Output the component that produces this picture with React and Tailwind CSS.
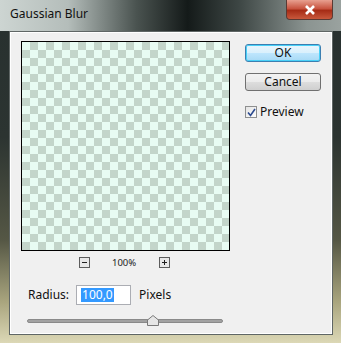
import React from 'react';

const font = { fontFamily: '"Noto Sans", "Liberation Sans", sans-serif' };

function SmallBox({ sign }) {
  return (
    <div className="w-[11px] h-[11px] border border-[#5c5c5c] bg-[#e8e8e8] flex items-center justify-center">
      <svg width="7" height="7" viewBox="0 0 7 7">
        <path d="M1 3.5h5" stroke="#202020" strokeWidth="1" />
        {sign === '+' && <path d="M3.5 1v5" stroke="#202020" strokeWidth="1" />}
      </svg>
    </div>
  );
}

export default function App() {
  return (
    <div
      className="w-[341px] h-[343px] relative overflow-hidden bg-[linear-gradient(to_bottom,#27302f_0%,#2c3431_40%,#555745_70%,#a9a57e_88%,#dcd8b6_100%)]"
      style={font}
    >
      {/* title bar */}
      <div className="h-[31px] flex items-center pl-[10px] bg-[linear-gradient(to_right,#cdd5d2_0%,#b4bdba_20%,#4a5350_40%,#141a19_55%,#3d4644_70%,#8b9491_90%,#9aa29f_100%)]">
        <span className="text-[12px] text-[#111] leading-none mt-[-3px]">Gaussian Blur</span>
      </div>
      <div className="absolute right-[8px] top-0 w-[47px] h-[20px] rounded-b-[4px] border border-[#5a3a34] border-t-0 bg-[linear-gradient(to_bottom,#e8a090_0%,#c85440_45%,#a62c16_55%,#c8583c_100%)] flex items-center justify-center">
        <svg width="12" height="10" viewBox="0 0 12 10">
          <path d="M2 1 L10 9 M10 1 L2 9" stroke="#ffffff" strokeWidth="2.6" />
        </svg>
      </div>

      {/* client area */}
      <div className="absolute left-[9px] top-[31px] w-[324px] h-[304px] bg-[#f0f0f0] border border-[#5f6665] shadow-[inset_1px_1px_0_#ffffff,inset_-1px_-1px_0_#ffffff] flex">
        <div className="flex flex-col ml-[11px] mt-[9px] w-[209px]">
          <div className="w-[209px] h-[210px] border border-black bg-[repeating-conic-gradient(#c3d5ca_0%_25%,#e8fcf3_0%_50%)] bg-[length:16px_16px]" />
          <div className="flex items-center h-[11px] mt-[6px]">
            <div className="ml-[58px]"><SmallBox sign="-" /></div>
            <span className="ml-[22px] text-[9.5px] text-[#222] leading-none">100%</span>
            <div className="ml-[23px]"><SmallBox sign="+" /></div>
          </div>
          <div className="flex items-center h-[20px] mt-[17px] pl-[7px]">
            <span className="text-[12px] text-[#111] leading-none">Radius:</span>
            <div className="ml-[7px] w-[55px] h-[20px] border border-[#abadb3] bg-white flex items-center pl-[4px]">
              <span className="bg-[#3399ff] text-white text-[12px] leading-[14px] px-[1px]">100,0</span>
            </div>
            <span className="ml-[8px] text-[12px] text-[#111] leading-none">Pixels</span>
          </div>
          <div className="relative mt-[10px] ml-[6px] w-[196px] h-[12px] flex items-center">
            <div className="w-full h-[4px] rounded-full bg-[#a2a2a2] border border-[#8a8a8a]" />
            <svg className="absolute left-[120px] top-[0px]" width="12" height="11" viewBox="0 0 12 11">
              <path d="M6 0.5 L11.5 5 L11.5 10.5 L0.5 10.5 L0.5 5 Z" fill="#e6e6e6" stroke="#7a7a7a" />
            </svg>
          </div>
        </div>

        <div className="flex flex-col ml-[15px] mt-[12px] w-[76px]">
          <button className="h-[18px] rounded-[3px] border border-[#3c7fb1] bg-[linear-gradient(to_bottom,#eaf6fd_0%,#d9f0fc_50%,#bee6fd_51%,#a7d9f5_100%)] shadow-[inset_0_0_0_1px_#48d0f7] text-[12px] text-[#111] leading-none">
            OK
          </button>
          <button className="h-[18px] mt-[11px] rounded-[3px] border border-[#707070] bg-[linear-gradient(to_bottom,#f2f2f2_0%,#ebebeb_50%,#dddddd_51%,#cfcfcf_100%)] text-[12px] text-[#111] leading-none">
            Cancel
          </button>
          <div className="flex items-center mt-[15px]">
            <div className="w-[12px] h-[12px] border border-[#8e8f8f] bg-[linear-gradient(to_bottom_right,#e4e4e4,#fcfcfc)] flex items-center justify-center">
              <svg width="9" height="9" viewBox="0 0 9 9">
                <path d="M1 4.5 L3.5 7.5 L8 1" fill="none" stroke="#2b4a8f" strokeWidth="1.6" />
              </svg>
            </div>
            <span className="ml-[3px] text-[12px] text-[#111] leading-none">Preview</span>
          </div>
        </div>
      </div>
    </div>
  );
}
